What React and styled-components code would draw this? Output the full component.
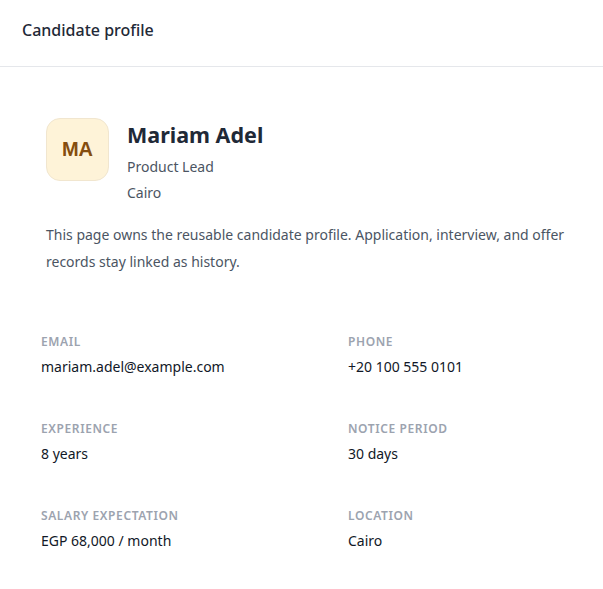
import styled, { createGlobalStyle } from "styled-components";

const GlobalStyle = createGlobalStyle`
  html, body {
    margin: 0;
    padding: 0;
    background: #fff;
  }
  body {
    font-family: "Noto Sans", "Open Sans", sans-serif;
    color: #1f2937;
  }
`;

const fields = [
  { label: "Email", value: "mariam.adel@example.com" },
  { label: "Phone", value: "+20 100 555 0101" },
  { label: "Experience", value: "8 years" },
  { label: "Notice period", value: "30 days" },
  { label: "Salary expectation", value: "EGP 68,000 / month" },
  { label: "Location", value: "Cairo" },
];

export default function App() {
  return (
    <>
      <GlobalStyle />
      <Page>
        <Header>
          <HeaderTitle>Candidate profile</HeaderTitle>
        </Header>

        <Body>
          <Profile>
            <Avatar>MA</Avatar>
            <Identity>
              <Name>Mariam Adel</Name>
              <Meta>Product Lead</Meta>
              <Meta>Cairo</Meta>
            </Identity>
          </Profile>
          <Description>
            This page owns the reusable candidate profile. Application, interview, and offer
            records stay linked as history.
          </Description>
        </Body>

        <Details>
          {fields.map((f) => (
            <Field key={f.label}>
              <Label>{f.label}</Label>
              <Value>{f.value}</Value>
            </Field>
          ))}
        </Details>
      </Page>
    </>
  );
}

const Page = styled.div`
  width: 603px;
  min-height: 589px;
  background: #fff;
`;

const Header = styled.div`
  height: 67px;
  padding: 18px 22px 0;
  border-bottom: 1px solid #e5e7eb;
  box-sizing: border-box;
`;

const HeaderTitle = styled.h1`
  margin: 0;
  font-size: 16px;
  line-height: 24px;
  font-weight: 500;
  color: #1f2937;
`;

const Body = styled.div`
  padding: 51px 28px 0 46px;
`;

const Profile = styled.div`
  display: flex;
  align-items: flex-start;
  gap: 18px;
`;

const Avatar = styled.div`
  width: 63px;
  height: 63px;
  box-sizing: border-box;
  border-radius: 14px;
  border: 1px solid #f1e6cf;
  background: #fef3d8;
  color: #854d0e;
  display: flex;
  align-items: center;
  justify-content: center;
  font-family: "Liberation Sans", Arial, sans-serif;
  font-weight: 700;
  font-size: 20px;
`;

const Identity = styled.div`
  display: flex;
  flex-direction: column;
  padding-top: 1px;
`;

const Name = styled.h2`
  margin: 0 0 3px;
  font-size: 21.5px;
  font-weight: 700;
  line-height: 32px;
  color: #1f2937;
`;

const Meta = styled.div`
  font-size: 14px;
  line-height: 26px;
  color: #4b5563;
`;

const Description = styled.p`
  margin: 15px 0 0;
  font-size: 14px;
  line-height: 27px;
  color: #4b5563;
`;

const Details = styled.div`
  display: grid;
  grid-template-columns: 307px 1fr;
  row-gap: 44px;
  padding: 59px 41px 0;
`;

const Field = styled.div`
  display: flex;
  flex-direction: column;
  gap: 7px;
`;

const Label = styled.div`
  font-size: 12px;
  font-weight: 600;
  letter-spacing: 0.05em;
  text-transform: uppercase;
  color: #9ca3af;
  line-height: 16px;
`;

const Value = styled.div`
  font-size: 14px;
  line-height: 20px;
  color: #111827;
`;
